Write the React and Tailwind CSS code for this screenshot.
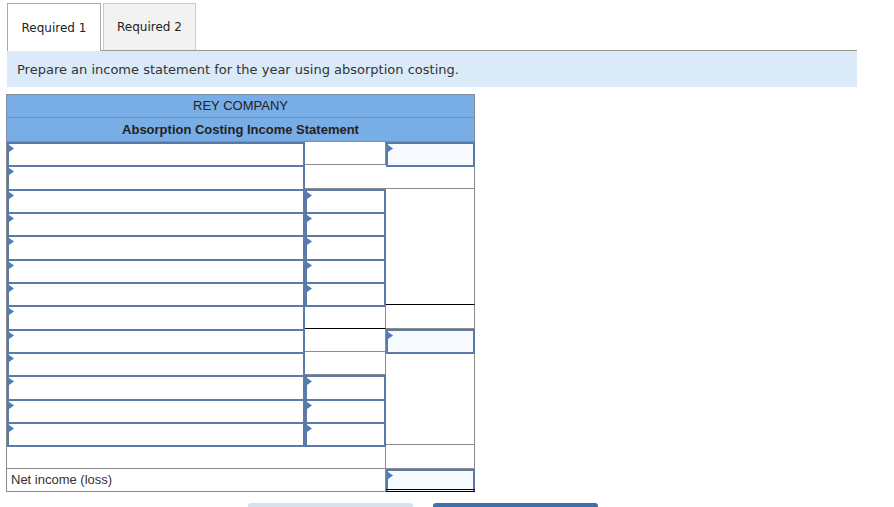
import React from "react";

function Arrow() {
  return (
    <svg width="5" height="7" viewBox="0 0 5 7" className="absolute left-0 top-[1px]">
      <polygon points="0,0 5,3.5 0,7" fill="#4a7cc0" />
    </svg>
  );
}

function In({ cls, bg = "bg-white", extra = "" }) {
  return (
    <div className={`${cls} relative border-2 border-[#5a7aa8] ${bg} -mb-[2px] ${extra}`}>
      <Arrow />
    </div>
  );
}

function P({ cls, extra = "" }) {
  return <div className={`${cls} border-r border-b border-[#8c8c8c] ${extra}`} />;
}

export default function App() {
  return (
    <div className="w-[894px] h-[507px] overflow-hidden bg-white text-[#222]" style={{ fontFamily: "Arial, 'Liberation Sans', sans-serif" }}>
      <div className="flex pl-[7px] pt-[3px] gap-[2px] relative z-10" style={{ fontFamily: "Verdana, 'DejaVu Sans', sans-serif" }}>
        <div className="w-[94px] h-[48px] border border-b-0 border-[#aaaaaa] bg-white flex items-center justify-center text-[12px] text-[#222]">
          Required 1
        </div>
        <div className="w-[93px] h-[47px] border border-b-0 border-[#cccccc] bg-[#f2f2f2] flex items-center justify-center text-[12px] text-[#222]">
          Required 2
        </div>
      </div>
      <div
        className="ml-[7px] -mt-px w-[850px] h-[37px] border-t border-[#9a9a9a] bg-[#dbeaf8] flex items-center pl-[10px] pt-[2px] text-[13px] text-[#333]"
        style={{ fontFamily: "Verdana, 'DejaVu Sans', sans-serif" }}
      >
        Prepare an income statement for the year using absorption costing.
      </div>

      <div className="ml-[6px] mt-[7px] w-[469px]">
        <div className="h-[24px] bg-[#79ade6] border border-[#7e8e9e] flex items-center justify-center text-[13px] text-[#222]">
          REY COMPANY
        </div>
        <div className="h-[24px] bg-[#79ade6] border border-t-0 border-[#7e8e9e] flex items-center justify-center text-[13px] font-bold text-[#222]">
          Absorption Costing Income Statement
        </div>
        <div className="grid grid-cols-[298px_81px_89px] grid-rows-[repeat(15,minmax(0,1fr))] h-[350px] border-l border-[#8c8c8c]">
          {/* r1 */}
          <In cls="col-start-1 row-start-1" />
          <P cls="col-start-2 row-start-1" />
          <In cls="col-start-3 row-start-1" bg="bg-[#f7fbff]" />
          {/* r2 */}
          <In cls="col-start-1 row-start-2" />
          <P cls="col-start-2 col-span-2 row-start-2" />
          {/* r3-7 */}
          <In cls="col-start-1 row-start-3" />
          <In cls="col-start-2 row-start-3" />
          <In cls="col-start-1 row-start-4" />
          <In cls="col-start-2 row-start-4" />
          <In cls="col-start-1 row-start-5" />
          <In cls="col-start-2 row-start-5" />
          <In cls="col-start-1 row-start-6" />
          <In cls="col-start-2 row-start-6" />
          <In cls="col-start-1 row-start-7" />
          <In cls="col-start-2 row-start-7" />
          <div className="col-start-3 row-start-3 row-span-5 border-r border-l border-[#8c8c8c] border-b border-b-black -ml-px" />
          {/* r8 */}
          <In cls="col-start-1 row-start-8" />
          <div className="col-start-2 row-start-8 border-r border-[#8c8c8c] border-b border-b-black" />
          <P cls="col-start-3 row-start-8" />
          {/* r9 */}
          <In cls="col-start-1 row-start-9" />
          <P cls="col-start-2 row-start-9" />
          <In cls="col-start-3 row-start-9" bg="bg-[#f7fbff]" />
          {/* r10-13 */}
          <In cls="col-start-1 row-start-10" />
          <P cls="col-start-2 row-start-10" />
          <In cls="col-start-1 row-start-11" />
          <In cls="col-start-2 row-start-11" />
          <In cls="col-start-1 row-start-12" />
          <In cls="col-start-2 row-start-12" />
          <In cls="col-start-1 row-start-13" />
          <In cls="col-start-2 row-start-13" />
          <P cls="col-start-3 row-start-10 row-span-4" />
          {/* r14 */}
          <P cls="col-start-1 col-span-2 row-start-14" />
          <P cls="col-start-3 row-start-14" />
          {/* r15 */}
          <div className="col-start-1 col-span-2 row-start-15 border-r border-b border-[#8c8c8c] flex items-center pl-[4px] text-[13px] text-[#333]">
            Net income (loss)
          </div>
          <div className="col-start-3 row-start-15 relative border-2 border-b-0 border-[#5a7aa8] bg-[#f7fbff]">
            <Arrow />
            <div className="absolute left-[-2px] right-[-2px] bottom-0 h-[3px] border-y border-black" />
          </div>
        </div>
      </div>

      <div className="flex mt-[11px]">
        <div className="ml-[248px] w-[165px] h-[10px] bg-[#d6e2f0] rounded-t-[3px]" />
        <div className="ml-[20px] w-[165px] h-[10px] bg-[#3b71b1] rounded-t-[3px]" />
      </div>
    </div>
  );
}
